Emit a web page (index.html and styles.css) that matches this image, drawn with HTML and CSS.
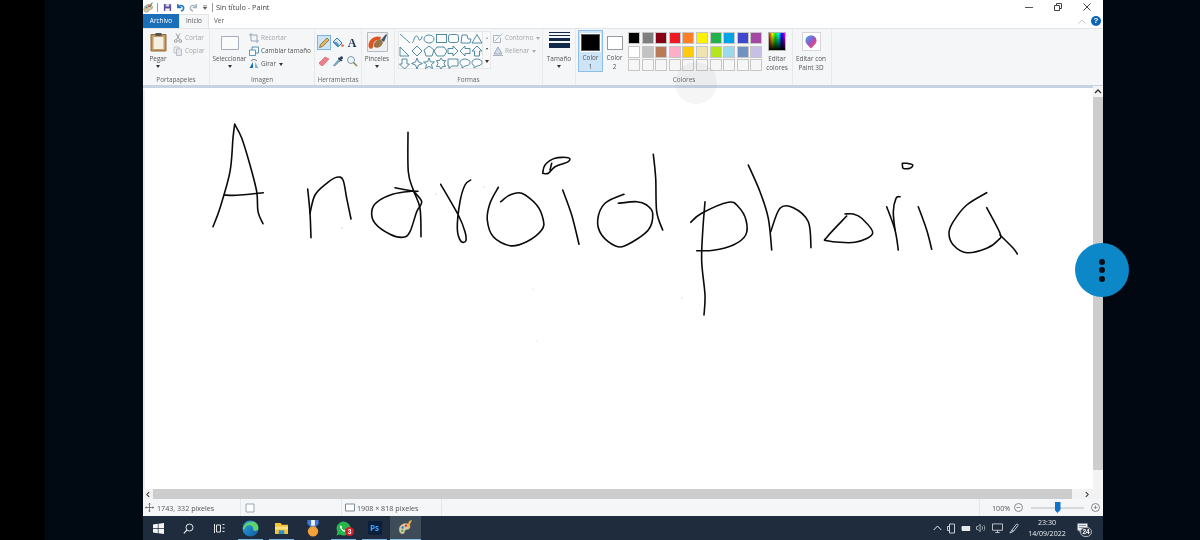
FILE: index.html
```html
<!DOCTYPE html>
<html lang="es">
<head>
<meta charset="utf-8">
<title>Sin título - Paint</title>
<link rel="stylesheet" href="styles.css">
</head>
<body>
<div class="screen">
  <div class="edge-left"><div class="edge-black"></div></div>
  <div class="window">
    <header class="titlebar soft">
      <svg class="qa qa-paint" viewBox="0 0 12 12"><path d="M1 8c0-4 4-6 7-5 3 1 3 4 1 5-1 .5-2 0-2.500 1S6 11 4 11 1 10 1 8z" fill="#d8c9a0" stroke="#8a7a55" stroke-width=".6"/><circle cx="4" cy="6" r="1" fill="#2a7fc9"/><circle cx="6.500" cy="4.500" r="1" fill="#d33"/><path d="M9 1l2-1-3 6-1-1z" fill="#6a8a5a"/></svg>
      <i class="vsep"></i>
      <svg class="qa qa-save" viewBox="0 0 10 10"><path d="M1 1h7l1 1v7H1z" fill="#5c4a9c"/><path d="M3 1h4v3H3z" fill="#d9d4ee"/><path d="M2.500 6h5v3h-5z" fill="#eee"/></svg>
      <svg class="qa qa-undo" viewBox="0 0 10 10"><path d="M2 1v4h4M2.500 4.500C4 2 8 2 8.500 5c.3 2-1 3.500-3 4" fill="none" stroke="#1f77c8" stroke-width="1.700"/></svg>
      <svg class="qa qa-redo" viewBox="0 0 10 10"><path d="M8 1v4H4M7.500 4.500C6 2 2 2 1.500 5c-.3 2 1 3.500 3 4" fill="none" stroke="#a9b1b8" stroke-width="1.500"/></svg>
      <svg class="qa qa-more" viewBox="0 0 6 6"><path d="M1 1.500h4M1 3h4L3 5.500z" fill="#555" stroke="#666" stroke-width=".5"/></svg>
      <i class="vsep vsep-b"></i>
      <span class="title-text">Sin título - Paint</span>
      <span class="win-controls">
        <svg class="ctl" viewBox="0 0 10 10"><path d="M1 5.500h8" stroke="#555" stroke-width="1"/></svg>
        <svg class="ctl" viewBox="0 0 10 10"><path d="M1.500 3.500h5v5h-5zM3.500 3.500v-2h5v5h-2" fill="none" stroke="#444" stroke-width="1"/></svg>
        <svg class="ctl" viewBox="0 0 10 10"><path d="M1.500 1.500l7 7M8.500 1.500l-7 7" stroke="#444" stroke-width="1"/></svg>
      </span>
    </header>

    <nav class="tabs soft">
      <span class="tab tab-file">Archivo</span>
      <span class="tab tab-on">Inicio</span>
      <span class="tab tab-ver">Ver</span>
      <span class="tab-right">
        <svg class="chev" viewBox="0 0 8 5"><path d="M.5 4.500L4 1l3.500 3.500" fill="none" stroke="#c8ccd0" stroke-width="1"/></svg>
        <span class="help">?</span>
      </span>
    </nav>

    <section class="ribbon soft">
      <div class="group g-clip">
        <div class="group-body">
          <div class="bigbtn w-paste">
            <svg class="ic-paste" viewBox="0 0 17 20"><path d="M1 2.500h15V19H1z" fill="#c99a62" stroke="#8b6a3c"/><path d="M3.500 5h10v12h-10z" fill="#f4f0e4"/><path d="M5.500 1h6v3h-6z" fill="#555"/></svg>
            <span>Pegar</span><b class="caret"></b>
          </div>
          <div class="smallcol">
            <div class="small off"><svg class="ic-s" viewBox="0 0 10 10"><path d="M3 .5l3.500 6M7 .5l-3.500 6" stroke="#9a9da2" fill="none"/><circle cx="2.800" cy="8" r="1.400" fill="none" stroke="#9a9da2"/><circle cx="7.200" cy="8" r="1.400" fill="none" stroke="#9a9da2"/></svg><span>Cortar</span></div>
            <div class="small off"><svg class="ic-s" viewBox="0 0 10 10"><path d="M1 1h5v6H1z" fill="#eee" stroke="#b8bcc2" stroke-width=".8"/><path d="M3.500 3h5v6.500h-5z" fill="#e6e7ea" stroke="#b0b4ba" stroke-width=".8"/></svg><span>Copiar</span></div>
          </div>
        </div>
        <div class="group-label">Portapapeles</div>
      </div>

      <div class="group g-image">
        <div class="group-body">
          <div class="bigbtn w-select">
            <svg class="ic-select" viewBox="0 0 18 14"><path d="M.5.500h17v13H.5z" fill="#fbfbfc" stroke="#a6adb6"/></svg>
            <span>Seleccionar</span><b class="caret"></b>
          </div>
          <div class="smallcol">
            <div class="small off"><svg class="ic-s" viewBox="0 0 10 10"><path d="M2 0v8h8M0 2h8v8" fill="none" stroke="#98a6b4"/></svg><span>Recortar</span></div>
            <div class="small"><svg class="ic-s" viewBox="0 0 10 10"><path d="M.5 4h6v5.500h-6z" fill="#fff" stroke="#3a7f9c" stroke-width=".8"/><path d="M3 4V1h6.500v6H6.500" fill="none" stroke="#3a7f9c" stroke-width=".8"/></svg><span>Cambiar tamaño</span></div>
            <div class="small"><svg class="ic-s" viewBox="0 0 10 10"><path d="M.5 9L4 3v6z" fill="#1f6fb0"/><path d="M6 3v6h3.500z" fill="#7fb6dc"/><path d="M2 2c2-2 4-2 6 0" fill="none" stroke="#444" stroke-width=".7"/></svg><span>Girar</span><b class="caret caret-in"></b></div>
          </div>
        </div>
        <div class="group-label">Imagen</div>
      </div>

      <div class="group g-tools">
        <div class="group-body tools">
          <span class="tool tool-on"><svg viewBox="0 0 12 12"><path d="M1.500 10.500l1-3L9 1l2 2-6.500 6.500z" fill="#e9b65a" stroke="#6b5a36" stroke-width=".7"/></svg></span>
          <span class="tool"><svg viewBox="0 0 12 12"><path d="M5 1l5 5-4 4-5-5z" fill="#dfe7ee" stroke="#2f78b2"/><path d="M1 5c2-1 5 0 6 3l-1 2z" fill="#4d93c9"/><circle cx="10.500" cy="8.500" r="1.300" fill="#e0672f"/></svg></span>
          <span class="tool tool-a">A</span>
          <span class="tool"><svg viewBox="0 0 12 12"><path d="M1 8l6-6 4 2-6 6.500H3z" fill="#ee7f8c" stroke="#c85a68" stroke-width=".6"/></svg></span>
          <span class="tool"><svg viewBox="0 0 12 12"><path d="M1.500 10.500L7 4l1.500 1.500L2.500 11z" fill="#7fb4d8" stroke="#3c6f94" stroke-width=".6"/><path d="M7 2l3.500 3.500L9 6.500 6 3.500z" fill="#243a55"/><circle cx="9.500" cy="2.800" r="1.500" fill="#243a55"/></svg></span>
          <span class="tool"><svg viewBox="0 0 12 12"><circle cx="5" cy="5" r="3.500" fill="#eaf4fb" stroke="#8b98a5"/><path d="M7.500 7.500l3.500 3.500" stroke="#8b7a55" stroke-width="1.400"/></svg></span>
        </div>
        <div class="group-label">Herramientas</div>
      </div>

      <div class="group g-brush">
        <div class="group-body">
          <div class="bigbtn w-brush">
            <svg class="ic-brush" viewBox="0 0 21 20"><path d="M.5.500h20v19H.5z" fill="#eef0f2" stroke="#b8bcc2"/><path d="M1.500 13C2 7 8 3 14 5l-1 3C9 7 6 10 6 15c-1 3-5 2-4.500-2z" fill="#e2521f"/><path d="M7 15c-1-4 2-7 6-8l3 3c-1 4-4 7-9 5z" fill="#9a7448"/><path d="M14 8l5-6 1 1-3 7z" fill="#41586e"/></svg>
            <span>Pinceles</span><b class="caret"></b>
          </div>
        </div>
        <div class="group-label group-blank">&nbsp;</div>
      </div>

      <div class="group g-shapes">
        <div class="group-body shapes-body">
          <div class="gallery">
            <svg class="gallery-svg" viewBox="0 0 84 36" fill="none" stroke="#3f7f99" stroke-width=".9">
              <path d="M1 1l10 9"/>
              <path d="M13 10c2-1 2-7 4.500-7S19 8 21 7s2-4 2-4"/>
              <ellipse cx="30" cy="6" rx="5" ry="4"/>
              <rect x="37.500" y="1.500" width="10" height="8"/>
              <rect x="49.500" y="1.500" width="10" height="8" rx="2"/>
              <path d="M62 10l1-8h5l1 4h3l-1 4z"/>
              <path d="M79 1.500l5 8.500H74z" transform="translate(-1 0)"/>
              <path d="M1 14l9 9H1z"/>
              <path d="M18 13l5 5-5 5-5-5z"/>
              <path d="M30 13l5 4-2 6h-6l-2-6z"/>
              <path d="M39 14h7l3 4-3 5h-7l-3-5z" transform="translate(-1 0)"/>
              <path d="M49 15.500h5V13l5 5-5 5v-2.500h-5z"/>
              <path d="M71 15.500h-5V13l-5 5 5 5v-2.500h5z"/>
              <path d="M78 13l5 5h-2.500v5h-5v-5H73z"/>
              <path d="M3 26h5v5h2.500l-5 5-5-5H3z"/>
              <path d="M18 25l1.500 4 4 1.500-4 1.500-1.500 4-1.500-4-4-1.500 4-1.500z"/>
              <path d="M30 25l1.500 3.800 4 .2-3 2.500 1 4-3.500-2.200-3.500 2.200 1-4-3-2.500 4-.2z"/>
              <path d="M42 25l1.500 2.500h3l-1.500 3 1.500 3h-3L42 36l-1.500-2.500h-3l1.500-3-1.500-3h3z"/>
              <path d="M49 26h10v7h-6l-3 2.500V33h-1z"/>
              <path d="M66 26c3 0 5 1.500 5 3.500S69 33 66 33l-3 2v-2.500c-1.500-.5-2-1.800-2-3 0-2 2-3.500 5-3.500z"/>
              <path d="M78 26c3 0 5 1.500 5 3.500S81 33 78 33l-3 2v-2.500c-1.500-.5-2-1.800-2-3 0-2 2-3.500 5-3.500z"/>
            </svg>
          </div>
          <div class="gallery-scroll"><b class="sc-up"></b><b class="sc-down"></b><b class="sc-more"></b></div>
          <div class="smallcol shape-opts">
            <div class="small off"><svg class="ic-s" viewBox="0 0 10 10"><path d="M.5 2.500h6M.5 2.500v7h7V5" fill="none" stroke="#a9b4be"/><path d="M2 8l7-7" stroke="#a9b4be"/></svg><span>Contorno</span><b class="caret caret-in caret-off"></b></div>
            <div class="small off"><svg class="ic-s" viewBox="0 0 10 10"><path d="M1 8l4-7 4 7z" fill="#d4dde6" stroke="#9faab5"/><path d="M0 9.500h10" stroke="#a9b4be"/></svg><span>Rellenar</span><b class="caret caret-in caret-off"></b></div>
          </div>
        </div>
        <div class="group-label">Formas</div>
      </div>

      <div class="group g-size">
        <div class="group-body">
          <div class="bigbtn w-size">
            <span class="sizes"><i class="ln1"></i><i class="ln2"></i><i class="ln3"></i><i class="ln4"></i></span>
            <span>Tamaño</span><b class="caret"></b>
          </div>
        </div>
        <div class="group-label group-blank">&nbsp;</div>
      </div>

      <div class="group g-colors">
        <div class="group-body colors-body">
          <div class="colorbtn colorbtn-on">
            <i class="swatch-big"></i>
            <span>Color<br>1</span>
          </div>
          <div class="colorbtn">
            <i class="swatch-two"></i>
            <span>Color<br>2</span>
          </div>
          <div class="palette">
            <i class="p c1"></i><i class="p c2"></i><i class="p c3"></i><i class="p c4"></i><i class="p c5"></i><i class="p c6"></i><i class="p c7"></i><i class="p c8"></i><i class="p c9"></i><i class="p c10"></i>
            <i class="p c11"></i><i class="p c12"></i><i class="p c13"></i><i class="p c14"></i><i class="p c15"></i><i class="p c16"></i><i class="p c17"></i><i class="p c18"></i><i class="p c19"></i><i class="p c20"></i>
            <i class="p"></i><i class="p"></i><i class="p"></i><i class="p"></i><i class="p"></i><i class="p"></i><i class="p"></i><i class="p"></i><i class="p"></i><i class="p"></i>
          </div>
          <div class="bigbtn w-edit">
            <i class="rainbow"></i>
            <span>Editar<br>colores</span>
          </div>
        </div>
        <div class="group-label label-colors">Colores</div>
      </div>

      <div class="group g-3d">
        <div class="group-body">
          <div class="bigbtn w-3d">
            <span class="tile3d"><svg viewBox="0 0 14 16"><defs><linearGradient id="ball" x1="0" y1="0" x2="1" y2="1"><stop offset="0" stop-color="#2fb7e6"/><stop offset=".45" stop-color="#8b5fd0"/><stop offset=".75" stop-color="#e8417c"/><stop offset="1" stop-color="#f7a83a"/></linearGradient></defs><path d="M7 15.500C4 12 .5 10 .5 6.500a6.500 6.500 0 0 1 13 0C13.500 10 10 12 7 15.500z" fill="url(#ball)"/></svg></span>
            <span>Editar con<br>Paint 3D</span>
          </div>
        </div>
        <div class="group-label group-blank">&nbsp;</div>
      </div>
    </section>
    <div class="ribbon-line"></div>

    <main class="workspace">
      <div class="canvas">
        <svg class="ink" viewBox="145 89 948 400" fill="none" stroke="#0a0a0a" stroke-width="1.600" stroke-linecap="round" stroke-linejoin="round">
          <path data-p="213,226.700 220,208 230,171.700 233,138 234.700,124.300"/>
          <path data-p="234.700,124.300 241.700,138 250,165 256.700,191.700 258,211.700 263,223.700"/>
          <path data-p="224,195 236.700,195.300 263.300,192.700"/>
          <path data-p="307.700,189 310,213 311,237.700"/>
          <path data-p="310,213.300 315,195 326.700,183.300 336.700,177.300 343,180 346.700,198.300 351,219"/>
          <path data-p="408,132.300 408.300,171.700 413.300,190 420,208.300 421,236.700"/>
          <path data-p="395,187.700 413,191 418,191.300"/>
          <path data-p="413.300,191 393.300,194 376.700,202.300 371.700,211.700 375,223.300 390,234.300 403.300,237.300 410,231.700 416.700,211.700 421.700,201.700 413.300,191"/>
          <path data-p="440.700,184.300 458.300,215 465,231.700 465.700,241 460.700,241 457.300,228.300 460,201.700 465,185 470.700,180"/>
          <path data-p="498.300,187.300 490,203.300 487.300,220 493.300,236.700 510,245.700 526.700,241.700 541.700,230 543.300,220 536.700,205 521.700,193.300 510,195 500.700,201.700"/>
          <path data-p="542.700,173.300 545,165 555,158.300 568.300,157.700 568.300,161.700 555,166.700 548.300,173.300 542.700,173.300"/>
          <path data-p="550,170 551.700,163.300"/>
          <path data-p="562.700,190 571.700,215 579,244.300"/>
          <path data-p="624,194.300 605,203.300 597.700,220 601.700,235 615,245.700 626.700,245 648.300,230 652.700,213.300 646.700,205 636.700,201.700 618.300,203.300"/>
          <path data-p="653.300,154.300 655.700,178.300 656.700,211.700 662.700,230"/>
          <path data-p="705,201.700 702.700,231.700 701.700,261.700 705,295 704,315"/>
          <path data-p="690.700,222.300 701.700,213.300 728.300,202.300 738.300,206.700 746,220 745.700,235 733.300,245 713.300,250.300 696.700,250.700"/>
          <path data-p="748.300,165 760,191.700 768.300,218.300 771.700,250"/>
          <path data-p="770.700,231.700 780,208.300 793.300,207.700 808.300,221.700 811,247.700"/>
          <path data-p="846.700,216 827.300,236.700 827.300,240.700 855,242.300 872.700,233.300 861.700,218.300 853.300,214 845,214"/>
          <path data-p="886.700,206.700 895,230 898.300,250"/>
          <path data-p="900,196.700 896,198.300 893.300,211.700 895,230"/>
          <path data-p="918.300,206.700 926.700,230 931.700,249.300"/>
          <path data-p="902.300,163.300 903.300,168.300 910,168.300 912.700,165 906.700,163.300 902.300,163.300"/>
          <path data-p="986.700,192.700 966.700,205 953.300,221.700 949,233.300 953.300,245 966.700,252.700 986.700,248.300 998.300,240 1000,233.300 986.700,207.700"/>
          <path data-p="1000,235 1013.300,248.300 1017.300,254"/>
          <g class="specks"><circle cx="342" cy="228" r=".7"/><circle cx="436" cy="194" r=".7"/><circle cx="484" cy="187" r=".7"/><circle cx="533" cy="289" r=".6"/><circle cx="682" cy="298" r=".7"/><circle cx="537" cy="341" r=".6"/></g>
        </svg>
      </div>
      <div class="vscroll">
        <svg class="arrow-v" viewBox="0 0 8 5"><path d="M1 4l3-3 3 3" fill="none" stroke="#333" stroke-width="1.300"/></svg>
        <div class="vthumb"></div>
      </div>
    </main>

    <div class="hscroll">
      <svg class="arrow-h" viewBox="0 0 5 8"><path d="M4 1L1 4l3 3" fill="none" stroke="#333" stroke-width="1.300"/></svg>
      <div class="hthumb"></div>
      <svg class="arrow-h arrow-r" viewBox="0 0 5 8"><path d="M1 1l3 3-3 3" fill="none" stroke="#333" stroke-width="1.300"/></svg>
    </div>

    <footer class="status soft">
      <div class="st st-pos">
        <svg class="st-move" viewBox="0 0 10 10"><path d="M5 0v10M0 5h10M3.800 1.500L5 .3l1.200 1.200M3.800 8.500L5 9.700l1.200-1.200M1.500 3.800L.3 5l1.200 1.200M8.500 3.800L9.700 5 8.500 6.200" fill="none" stroke="#555" stroke-width=".8"/></svg>
        <span>1743, 332 píxeles</span>
      </div>
      <div class="st st-sel"><svg class="st-box" viewBox="0 0 10 10"><path d="M1 1h8v8H1z" fill="#fff" stroke="#9aa6b2"/></svg></div>
      <div class="st st-dim"><svg class="st-box" viewBox="0 0 10 10"><path d="M.5 1h9v7h-9z" fill="#fff" stroke="#7e8b98"/></svg><span>1908 × 818 píxeles</span></div>
      <div class="st st-empty"></div>
      <div class="st st-zoom">
        <span class="zoom-pct">100%</span>
        <span class="zoom-btn">−</span>
        <span class="slider"><i class="slider-thumb"></i></span>
        <span class="zoom-btn">+</span>
      </div>
    </footer>

    <div class="taskbar soft">
      <span class="tb tb-start"><svg viewBox="0 0 11 11"><path d="M0 1.500l4.800-.7v4.300H0zM5.500.7L11 0v5.100H5.500zM0 5.800h4.800v4.400L0 9.500zM5.500 5.800H11V11l-5.500-.7z" fill="#f4f6f8"/></svg></span>
      <span class="tb tb-sys"><svg viewBox="0 0 11 11"><circle cx="6.500" cy="4.500" r="3.500" fill="none" stroke="#e4e8ec"/><path d="M4 7L.8 10.300" stroke="#e4e8ec" stroke-width="1.200"/></svg></span>
      <span class="tb tb-sys"><svg viewBox="0 0 11 11"><path d="M2.500 2h4v7h-4zM.5 1v9M8.500 1.500h2M8.500 5h2M8.500 8.500h2" fill="none" stroke="#dfe3e8"/></svg></span>
      <span class="tb tb-run"><svg class="app-edge" viewBox="0 0 16 16"><defs><linearGradient id="edge" x1="0" y1="0" x2="1" y2="1"><stop offset="0" stop-color="#2fa8e0"/><stop offset="1" stop-color="#0c59a4"/></linearGradient></defs><circle cx="8" cy="8" r="7.500" fill="url(#edge)"/><path d="M.8 8C2 2.500 10-.5 14 3.500c2 2 1.500 5 1 6-1 1.200-5 1.200-4.500-1.500 0-2-2-3.500-4.500-3C4 5.500 3 7 2.500 8.500 2 9.500 1 9 .8 8z" fill="#5fd36b"/></svg></span>
      <span class="tb tb-run"><svg class="app-folder" viewBox="0 0 16 14"><path d="M1 1h6l1.500 2H15v10H1z" fill="#f4c430"/><path d="M1 5h14v3H1z" fill="#fbe08a"/><path d="M5 9h6v4H5z" fill="#2d8dd6"/></svg></span>
      <span class="tb"><svg class="app-medal" viewBox="0 0 14 18"><path d="M1 0h12v4L8.500 9h-3L1 4z" fill="#3d78d6"/><path d="M5 0h4v6H5z" fill="#f2f2f2"/><circle cx="7" cy="12" r="5.500" fill="#f2a03a"/></svg></span>
      <span class="tb tb-run tb-wa"><svg class="app-wa" viewBox="0 0 16 16"><path d="M8 .5a7.500 7.500 0 0 0-6.400 11.300L.5 15.500l3.800-1A7.500 7.500 0 1 0 8 .5z" fill="#27b64b"/><path d="M5 4.500c-1 1-1 3 1 5s4 2.500 5 1.500l-1.500-1.500-1 .5c-1-.5-2-1.500-2.500-2.500l.5-1z" fill="#fff"/></svg><em class="wa-badge">3</em></span>
      <span class="tb tb-run"><span class="ps">Ps</span></span>
      <span class="tb tb-active"><svg class="app-paint" viewBox="0 0 16 16"><path d="M1 10c0-5 6-8 10-6 3 1.500 2.500 5 0 6-1.500.5-3 0-3.500 1.500S7 15 5 15s-4-2-4-5z" fill="#d8c9a8" stroke="#7a6c50" stroke-width=".5"/><circle cx="5" cy="8" r="1.300" fill="#2a7fc9"/><circle cx="8.500" cy="6" r="1.300" fill="#d33"/><circle cx="4.500" cy="11.500" r="1.200" fill="#3a3"/><path d="M12 1l3-1-4 8-1.500-1z" fill="#f0b040"/></svg></span>
      <div class="tray">
        <svg class="ti ti-chev" viewBox="0 0 9 6"><path d="M.7 5L4.500 1 8.300 5" fill="none" stroke="#e6eaee" stroke-width="1"/></svg>
        <svg class="ti ti-meet" viewBox="0 0 10 11"><path d="M2.500 1h5v9h-5zM.5 3.500h2v4h-2z" fill="none" stroke="#d8dde2" stroke-width=".9"/></svg>
        <svg class="ti ti-bat" viewBox="0 0 12 8"><path d="M1 1h10v6H1z" fill="#e4e8ec"/><path d="M0 2v3" stroke="#e4e8ec"/></svg>
        <svg class="ti ti-vol" viewBox="0 0 11 10"><path d="M.5 3.500H2L4.500 1v8L2 6.500H.5z" fill="none" stroke="#d8dde2" stroke-width=".8"/><path d="M6.500 3c.8 1 .8 3 0 4M8.500 1.800c1.400 1.800 1.400 4.600 0 6.400" fill="none" stroke="#d8dde2" stroke-width=".7"/></svg>
        <svg class="ti ti-mon" viewBox="0 0 12 11"><path d="M.5 1h11v7h-11zM6 8v2.500M3.500 10.500h5" fill="none" stroke="#d8dde2" stroke-width=".9"/></svg>
        <svg class="ti ti-pen" viewBox="0 0 11 12"><path d="M1 11l2-3 5-6.500c1-1 2.500 0 1.800 1.300L5 9zM3 8l2 1" fill="none" stroke="#d8dde2"/></svg>
        <div class="clock"><span>23:30</span><span>14/09/2022</span></div>
        <span class="notif"><svg viewBox="0 0 11 10"><path d="M.5.500h10v7H5L2.500 9.500v-2h-2z" fill="#e8ecf0"/><path d="M2 2.500h7M2 4.500h7" stroke="#5a6570" stroke-width=".6"/></svg><em class="notif-count">24</em></span>
      </div>
    </div>
  </div>
  <div class="edge-right"></div>

  <div class="touch-ghost"></div>
  <div class="fab"><i></i><i></i><i></i></div>
</div>
<script src="ink.js"></script>
</body>
</html>
```
FILE: styles.css
```css
* { box-sizing: border-box; }
html, body { margin: 0; padding: 0; background: #000; }
body { width: 1200px; height: 540px; overflow: hidden; font-family: "Open Sans", "Noto Sans", sans-serif; font-size: 6.400px; color: #555; }
i, em, b { font-style: normal; display: block; }

.screen { position: relative; display: flex; width: 1200px; height: 540px; overflow: hidden; }
.edge-left { width: 143px; background: #010a13; }
.edge-black { width: 45px; height: 100%; background: #000; }
.edge-right { flex: 1; background: #010812; }
.window { width: 960px; height: 540px; display: flex; flex-direction: column; background: #fff; }
.soft { filter: blur(.3px); }

/* title bar */
.titlebar { height: 14px; display: flex; align-items: center; background: #fff; font-size: 7.300px; color: #444; }
.qa { display: block; flex: none; }
.qa-paint { width: 11px; height: 11px; margin-right: 2px; }
.vsep { width: 1px; height: 9px; background: #999; margin: 0 5px 0 1px; flex: none; }
.qa-save { width: 9px; height: 9px; margin-right: 4px; }
.qa-undo { width: 9px; height: 9px; margin-right: 4px; }
.qa-redo { width: 9px; height: 9px; margin-right: 4px; }
.qa-more { width: 6px; height: 6px; }
.vsep-b { margin: 0 3px 0 4px; }
.title-text { line-height: 14px; }
.win-controls { margin-left: auto; display: flex; align-items: center; gap: 19px; padding-right: 11px; }
.ctl { width: 10px; height: 10px; display: block; }

/* tabs */
.tabs { height: 14px; display: flex; align-items: stretch; background: #fff; line-height: 14px; font-size: 6.400px; }
.tab { display: block; text-align: center; }
.tab-file { width: 36px; background: #1b6fb9; color: #fff; }
.tab-on { width: 30px; background: #f5f6f7; border: 1px solid #e3e4e6; border-bottom: 0; line-height: 12px; }
.tab-ver { width: 20px; }
.tab-right { margin-left: auto; display: flex; align-items: center; gap: 5px; padding-right: 2px; }
.chev { width: 8px; height: 5px; display: block; }
.help { width: 10px; height: 10px; border-radius: 50%; background: #0b63b6; color: #fff; font: bold 8px/10px "Liberation Sans", sans-serif; text-align: center; }

/* ribbon */
.ribbon { height: 57px; display: flex; background: #f5f6f7; border-top: 1px solid #e4e5e7; }
.group { display: flex; flex-direction: column; border-right: 1px solid #e8e9eb; flex: none; }
.group-body { height: 46px; display: flex; }
.group-label { height: 10px; line-height: 10px; text-align: center; color: #666; }
.group-blank { visibility: hidden; }
.g-clip { width: 67px; }
.g-image { width: 105px; }
.g-tools { width: 47px; }
.g-brush { width: 33px; }
.g-shapes { width: 148px; }
.g-size { width: 33px; }
.g-colors { width: 217px; }
.g-3d { width: 39px; }

.bigbtn { display: flex; flex-direction: column; align-items: center; line-height: 9px; text-align: center; padding-top: 3px; flex: none; color: #555; white-space: nowrap; }
.bigbtn > span:last-of-type { display: block; }
.caret { width: 0; height: 0; border: 2px solid transparent; border-top: 3px solid #333; border-bottom: 0; margin-top: 2px; }
.caret-in { margin: 0 0 0 3px; }
.caret-off { border-top-color: #aab; }

.w-paste { width: 30px; }
.ic-paste { width: 17px; height: 20px; margin-bottom: 2px; display: block; }
.smallcol { display: flex; flex-direction: column; gap: 3px; padding-top: 4px; }
.small { display: flex; align-items: center; height: 10px; line-height: 10px; white-space: nowrap; color: #555; }
.small.off { color: #a4a7ab; }
.ic-s { width: 10px; height: 10px; display: block; margin-right: 2px; flex: none; }

.w-select { width: 39px; }
.ic-select { width: 18px; height: 14px; margin: 4px 0; display: block; }

.tools { display: grid; grid-template-columns: repeat(3, 14px); grid-auto-rows: 18px; padding: 6px 0 0 2px; }
.tool { display: flex; align-items: center; justify-content: center; height: 15px; }
.tool svg { width: 12px; height: 12px; display: block; }
.tool-on { background: #cde4f7; border: 1px solid #7fb4e0; }
.tool-a { font: bold 12px/14px "Liberation Serif", serif; color: #1d3557; }

.w-brush { width: 30px; }
.ic-brush { width: 21px; height: 20px; margin-bottom: 2px; display: block; }

.shapes-body { padding: 2px 0 0 3px; }
.gallery { width: 85px; height: 38px; background: #fbfbfc; border: 1px solid #e6e7e9; padding-top: 1px; }
.gallery-svg { width: 84px; height: 36px; display: block; }
.gallery-scroll { width: 8px; height: 38px; display: flex; flex-direction: column; align-items: center; justify-content: space-around; border: 1px solid #e6e7e9; border-left: 0; background: #f9f9fa; margin-right: 2px; }
.sc-up { width: 0; height: 0; border: 1.500px solid transparent; border-bottom: 2px solid #999; border-top: 0; }
.sc-down { width: 0; height: 0; border: 1.500px solid transparent; border-top: 2px solid #333; border-bottom: 0; }
.sc-more { width: 0; height: 0; border: 2px solid transparent; border-top: 3px solid #333; border-bottom: 0; }
.shape-opts { padding-top: 2px; }

.w-size { width: 32px; }
.sizes { display: flex; flex-direction: column; width: 21px; height: 18px; gap: 2px; margin-bottom: 4px; }
.sizes i { background: #12294a; }
.ln1 { height: 1px; }
.ln2 { height: 1px; }
.ln3 { height: 3px; }
.ln4 { height: 5px; }

.colors-body { padding-left: 2px; }
.colorbtn { width: 25px; height: 42px; margin-top: 1px; display: flex; flex-direction: column; align-items: center; line-height: 9px; text-align: center; padding-top: 3px; border: 1px solid transparent; color: #555; }
.colorbtn span { display: block; }
.colorbtn + .colorbtn { width: 21px; margin-left: 1px; }
.colorbtn-on { background: #cde4f7; border-color: #8fbfe6; }
.swatch-big { width: 19px; height: 19px; background: #000; border: 1px solid #5b5b5b; outline: 1px solid #fff; margin-bottom: 2px; }
.swatch-two { width: 16px; height: 16px; background: #fff; border: 1px solid #9a9a9a; margin: 2px 0 3px; }
.palette { width: 138px; display: grid; grid-template-columns: repeat(10, 12px); grid-auto-rows: 12px; gap: 1.600px; padding: 3px 0 0 3px; height: 44px; }
.p { border: 1px solid #c6c6c6; background: #f6f6f7; }
.c1 { background: #000; } .c2 { background: #7f7f7f; } .c3 { background: #880015; } .c4 { background: #ed1c24; } .c5 { background: #ff7f27; }
.c6 { background: #fff200; } .c7 { background: #22b14c; } .c8 { background: #00a2e8; } .c9 { background: #3f48cc; } .c10 { background: #a349a4; }
.c11 { background: #fff; } .c12 { background: #c3c3c3; } .c13 { background: #b97a57; } .c14 { background: #ffaec9; } .c15 { background: #ffc90e; }
.c16 { background: #efe4b0; } .c17 { background: #b5e61d; } .c18 { background: #99d9ea; } .c19 { background: #7092be; } .c20 { background: #c8bfe7; }
.w-edit { width: 28px; }
.rainbow { width: 18px; height: 19px; margin-bottom: 3px; border: 1px solid #b4b4b4; background: linear-gradient(to bottom, rgba(0,0,0,0), #000), linear-gradient(to right, #f00, #ff0, #0f0, #0ff, #00f, #f0f); }
.w-3d { width: 36px; }
.tile3d { width: 19px; height: 19px; background: #fff; border: 1px solid #d6d6d8; display: flex; align-items: center; justify-content: center; margin-bottom: 3px; }
.tile3d svg { width: 12px; height: 14px; display: block; }

.ribbon-line { height: 4px; background: #fff; border-top: 3px solid #c9d2e0; }

/* work area */
.workspace { flex: 1; display: flex; min-height: 0; }
.canvas { flex: 1; background: #fff; border-left: 2px solid #e9edf3; min-width: 0; }
.ink { width: 948px; height: 400px; display: block; }
.specks circle { fill: #ccc; stroke: none; }
.vscroll { width: 10px; background: #f3f3f3; display: flex; flex-direction: column; align-items: center; margin-top: -3px; }
.arrow-v { width: 8px; height: 5px; margin: 3px 0; flex: none; }
.vthumb { width: 10px; height: 373px; background: #cdcdcd; }

.hscroll { height: 10px; display: flex; align-items: stretch; background: #f2f2f2; }
.arrow-h { width: 4px; height: 7px; margin: 2px 3px; flex: none; }
.hthumb { width: 919px; background: #cdcdcd; }
.arrow-r { margin-left: 13px; }

/* status bar */
.status { height: 17px; display: flex; align-items: center; background: #f5f6f7; font-size: 7.150px; color: #555; }
.st { height: 100%; display: flex; align-items: center; border-right: 1px solid #e6e7e9; white-space: nowrap; }
.st-pos { width: 98px; padding-left: 2px; gap: 3px; }
.st-move { width: 9px; height: 9px; display: block; }
.st-sel { width: 101px; padding-left: 4px; }
.st-box { width: 10px; height: 10px; display: block; }
.st-dim { width: 100px; padding-left: 3px; gap: 2px; }
.st-empty { width: 538px; }
.st-zoom { flex: 1; border-right: 0; padding-left: 12px; }
.zoom-pct { width: 22px; }
.zoom-btn { width: 9px; height: 9px; border: 1px solid #888; border-radius: 50%; display: flex; align-items: center; justify-content: center; font: 8px/1 "Liberation Sans", sans-serif; color: #555; flex: none; }
.slider { width: 53px; height: 2px; background: #d8d9db; margin: 0 7px 0 8px; display: flex; justify-content: center; align-items: center; }
.slider-thumb { width: 6px; height: 11px; background: #1173c6; clip-path: polygon(0 0, 100% 0, 100% 70%, 50% 100%, 0 70%); }

/* taskbar */
.taskbar { height: 24px; display: flex; align-items: stretch; background: #1e2c3d; color: #e8ecf0; }
.tb { width: 31px; display: flex; align-items: center; justify-content: center; position: relative; flex: none; }
.tb svg { display: block; }
.tb-start { width: 30px; }
.tb-start svg, .tb-sys svg { width: 11px; height: 11px; }
.app-edge { width: 17px; height: 17px; }
.app-folder { width: 15px; height: 13px; }
.app-medal { width: 14px; height: 17px; }
.app-wa { width: 15px; height: 15px; }
.app-paint { width: 15px; height: 15px; }
.tb-run::after { content: ""; position: absolute; left: 3px; right: 3px; bottom: 0; height: 1px; background: #78b6e0; }
.tb-active { background: #3e4b59; border-bottom: 1px solid #8cc4ea; }
.ps { width: 14px; height: 14px; background: #0a1f3c; color: #31a8ff; font: bold 8px/14px "Open Sans", sans-serif; text-align: center; border-radius: 1px; }
.wa-badge { position: absolute; left: 17px; top: 11px; width: 9px; height: 9px; border-radius: 50%; background: #d3202c; color: #fff; font: bold 6.500px/9px "Liberation Sans", sans-serif; text-align: center; }
.tray { margin-left: auto; display: flex; align-items: center; padding-right: 6px; }
.ti { display: block; flex: none; margin-right: 5px; }
.ti-chev { width: 9px; height: 6px; margin-right: 5.500px; }
.ti-meet { width: 10px; height: 11px; margin-right: 4px; }
.ti-bat { width: 10px; height: 7px; }
.ti-vol { width: 10px; height: 10px; margin-right: 5.500px; }
.ti-mon { width: 11px; height: 10px; margin-right: 6.500px; }
.ti-pen { width: 10px; height: 11px; margin-right: 8px; }
.clock { width: 40px; display: flex; flex-direction: column; align-items: center; line-height: 11px; font-size: 7.100px; color: #e8ecf0; }
.notif { position: relative; width: 30px; display: flex; justify-content: center; }
.notif svg { width: 11px; height: 10px; display: block; }
.notif-count { position: absolute; left: 13px; top: 4px; width: 12px; height: 10px; border-radius: 5px; background: #2e3a47; color: #fff; border: 1px solid #aab2bb; font: bold 6.500px/8px "Liberation Sans", sans-serif; text-align: center; }

/* overlays */
.touch-ghost { position: absolute; left: 675px; top: 62px; width: 42px; height: 42px; border-radius: 50%; background: rgba(120,120,120,.07); pointer-events: none; }
.fab { position: absolute; left: 1075px; top: 243px; width: 54px; height: 54px; border-radius: 50%; background: #0c87c8; display: flex; flex-direction: column; align-items: center; justify-content: center; gap: 2.500px; }
.fab i { width: 6px; height: 6px; border-radius: 50%; background: #041016; }
```
FILE: ink.js
```js
document.querySelectorAll('[data-p]').forEach(function (el) {
  var p = el.getAttribute('data-p').trim().split(/\s+/).map(function (s) {
    return s.split(',').map(Number);
  });
  var d = 'M' + p[0].join(' ');
  for (var i = 0; i < p.length - 1; i++) {
    var a = p[i - 1] || p[i], b = p[i], c = p[i + 1], e = p[i + 2] || c;
    d += 'C' + (b[0] + (c[0] - a[0]) / 6) + ' ' + (b[1] + (c[1] - a[1]) / 6) + ' ' +
      (c[0] - (e[0] - b[0]) / 6) + ' ' + (c[1] - (e[1] - b[1]) / 6) + ' ' + c[0] + ' ' + c[1];
  }
  el.setAttribute('d', d);
});
```
